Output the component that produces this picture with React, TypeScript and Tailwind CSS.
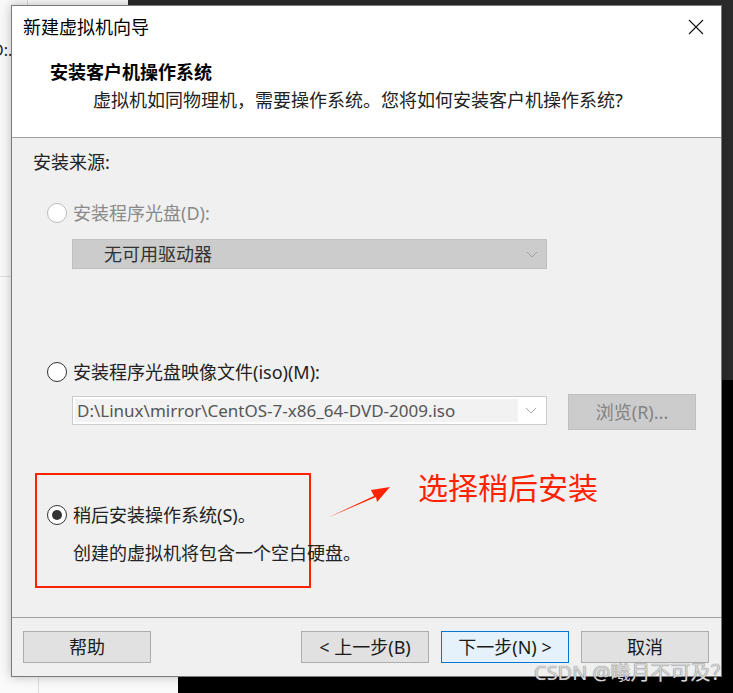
import React from "react";

type RadioProps = {
  checked?: boolean;
  disabled?: boolean;
};

function Radio({ checked, disabled }: RadioProps) {
  return (
    <span
      className={`flex h-[20px] w-[20px] shrink-0 items-center justify-center rounded-full border bg-white ${
        disabled ? "border-[#bcbcbc]" : "border-[#333333]"
      }`}
    >
      {checked ? <span className="h-[10px] w-[10px] rounded-full bg-[#333333]" /> : null}
    </span>
  );
}

function Chevron({ color }: { color: string }) {
  return (
    <svg width="12" height="7" viewBox="0 0 12 7" fill="none">
      <path d="M1 1l5 5 5-5" stroke={color} strokeWidth="1" />
    </svg>
  );
}

function FooterButton({
  label,
  primary,
  className,
}: {
  label: string;
  primary?: boolean;
  className?: string;
}) {
  return (
    <button
      className={`flex h-[32px] w-[128px] items-center justify-center border text-[18px] leading-none text-[#1a1a1a] ${
        primary ? "border-[#0078d7] bg-[#e5f1fb]" : "border-[#adadad] bg-[#e1e1e1]"
      } ${className ?? ""}`}
    >
      {label}
    </button>
  );
}

export default function App() {
  return (
    <div className="relative h-[693px] w-[733px] overflow-hidden bg-black font-['Noto_Sans','Noto_Sans_CJK_SC',sans-serif]">
      {/* windows behind the dialog */}
      <div className="absolute left-0 top-0 h-[693px] w-[128px] bg-[#f9f9f9]">
        <div className="absolute left-[27px] top-0 h-[6px] w-px bg-[#d9d9d9]" />
        <div className="absolute left-[-8px] top-[40px] text-[16px] leading-[20px] text-[#222]">D:.</div>
        <div className="absolute left-0 top-[276px] h-px w-[11px] bg-[#dddddd]" />
      </div>
      <div className="absolute left-[128px] top-0 h-[380px] w-[605px] bg-[#2b2b2b]" />
      <div className="absolute left-0 top-[677px] h-[16px] w-[178px] bg-[#fafafa]">
        <div className="absolute left-[38px] top-0 h-full w-px bg-[#dddddd]" />
      </div>

      {/* dialog */}
      <div className="relative ml-[11px] mt-[5px] flex h-[672px] w-[711px] flex-col border border-[#7a7a7a] bg-[#f0f0f0] shadow-[0_0_10px_rgba(0,0,0,0.25)]">
        <div className="flex h-[132px] flex-col border-b border-[#a0a0a0] bg-white">
          <div className="flex h-[42px] items-center justify-between pl-[11px] pr-[17px]">
            <span className="text-[18px] leading-[24px] text-black">新建虚拟机向导</span>
            <svg width="16" height="16" viewBox="0 0 16 16" fill="none">
              <path d="M1 1l14 14M15 1L1 15" stroke="#111" strokeWidth="1.1" />
            </svg>
          </div>
          <div className="mt-[12px] pl-[38px] text-[18px] font-bold leading-[24px] text-black">
            安装客户机操作系统
          </div>
          <div className="mt-[4px] pl-[81px] text-[18px] leading-[24px] text-[#222]">
            虚拟机如同物理机，需要操作系统。您将如何安装客户机操作系统?
          </div>
        </div>

        <div className="flex h-[479px] flex-col text-[18px] leading-[24px] text-[#222]">
          <div className="ml-[21px] mt-[12px]">安装来源:</div>

          <div className="ml-[35px] mt-[27px] flex items-center gap-[6px]">
            <Radio disabled />
            <span className="text-[#8a8a8a]">安装程序光盘(D):</span>
          </div>
          <div className="ml-[60px] mt-[14px] flex h-[30px] w-[475px] items-center justify-between border border-[#bfbfbf] bg-[#cccccc] pl-[31px] pr-[8px]">
            <span className="text-[#333]">无可用驱动器</span>
            <Chevron color="#a0a0a0" />
          </div>

          <div className="ml-[35px] mt-[91px] flex items-center gap-[6px]">
            <Radio />
            <span>安装程序光盘映像文件(iso)(M):</span>
          </div>
          <div className="ml-[60px] mt-[10px] flex items-start">
            <div className="mt-[2px] flex h-[29px] w-[475px] items-center border border-[#cccccc] bg-white p-[2px]">
              <div className="flex h-full w-[443px] items-center bg-[#f2f2f2] pl-[2px] text-[17px] text-[#555]">
                D:\Linux\mirror\CentOS-7-x86_64-DVD-2009.iso
              </div>
              <div className="flex flex-1 justify-center">
                <Chevron color="#a8a8a8" />
              </div>
            </div>
            <div className="ml-[21px] flex h-[36px] w-[128px] items-center justify-center border border-[#bfbfbf] bg-[#cccccc] text-[#838383]">
              浏览(R)...
            </div>
          </div>

          <div className="ml-[23px] mt-[43px] flex items-start">
            <div className="h-[115px] w-[276px] shrink-0 border-2 border-[#ff2200] pl-[10px] pt-[28px]">
              <div className="flex items-center gap-[6px] whitespace-nowrap">
                <Radio checked />
                <span>稍后安装操作系统(S)。</span>
              </div>
              <div className="ml-[26px] mt-[14px] whitespace-nowrap">创建的虚拟机将包含一个空白硬盘。</div>
            </div>
            <svg className="ml-[16px] mt-[11px]" width="64" height="35" viewBox="0 0 64 35">
              <polygon points="0,34 47,12 44,6 63,3 50,18 49,13" fill="#ff2200" />
            </svg>
            <span className="ml-[27px] mt-[-2px] whitespace-nowrap text-[30px] leading-[34px] text-[#ff2200]">
              选择稍后安装
            </span>
          </div>
        </div>

        <div className="flex flex-1 items-start border-t border-[#a0a0a0] pl-[11px] pt-[13px]">
          <FooterButton label="帮助" />
          <FooterButton label="< 上一步(B)" className="ml-[150px]" />
          <FooterButton label="下一步(N) >" primary className="ml-[12px]" />
          <FooterButton label="取消" className="ml-[12px]" />
        </div>
      </div>

      <div className="absolute left-[534px] top-[660px] whitespace-nowrap text-[20px] leading-[26px] text-[#d4d4d4] [text-shadow:0_0_1px_#555]">
        CSDN @曦月不可及？
      </div>
    </div>
  );
}
